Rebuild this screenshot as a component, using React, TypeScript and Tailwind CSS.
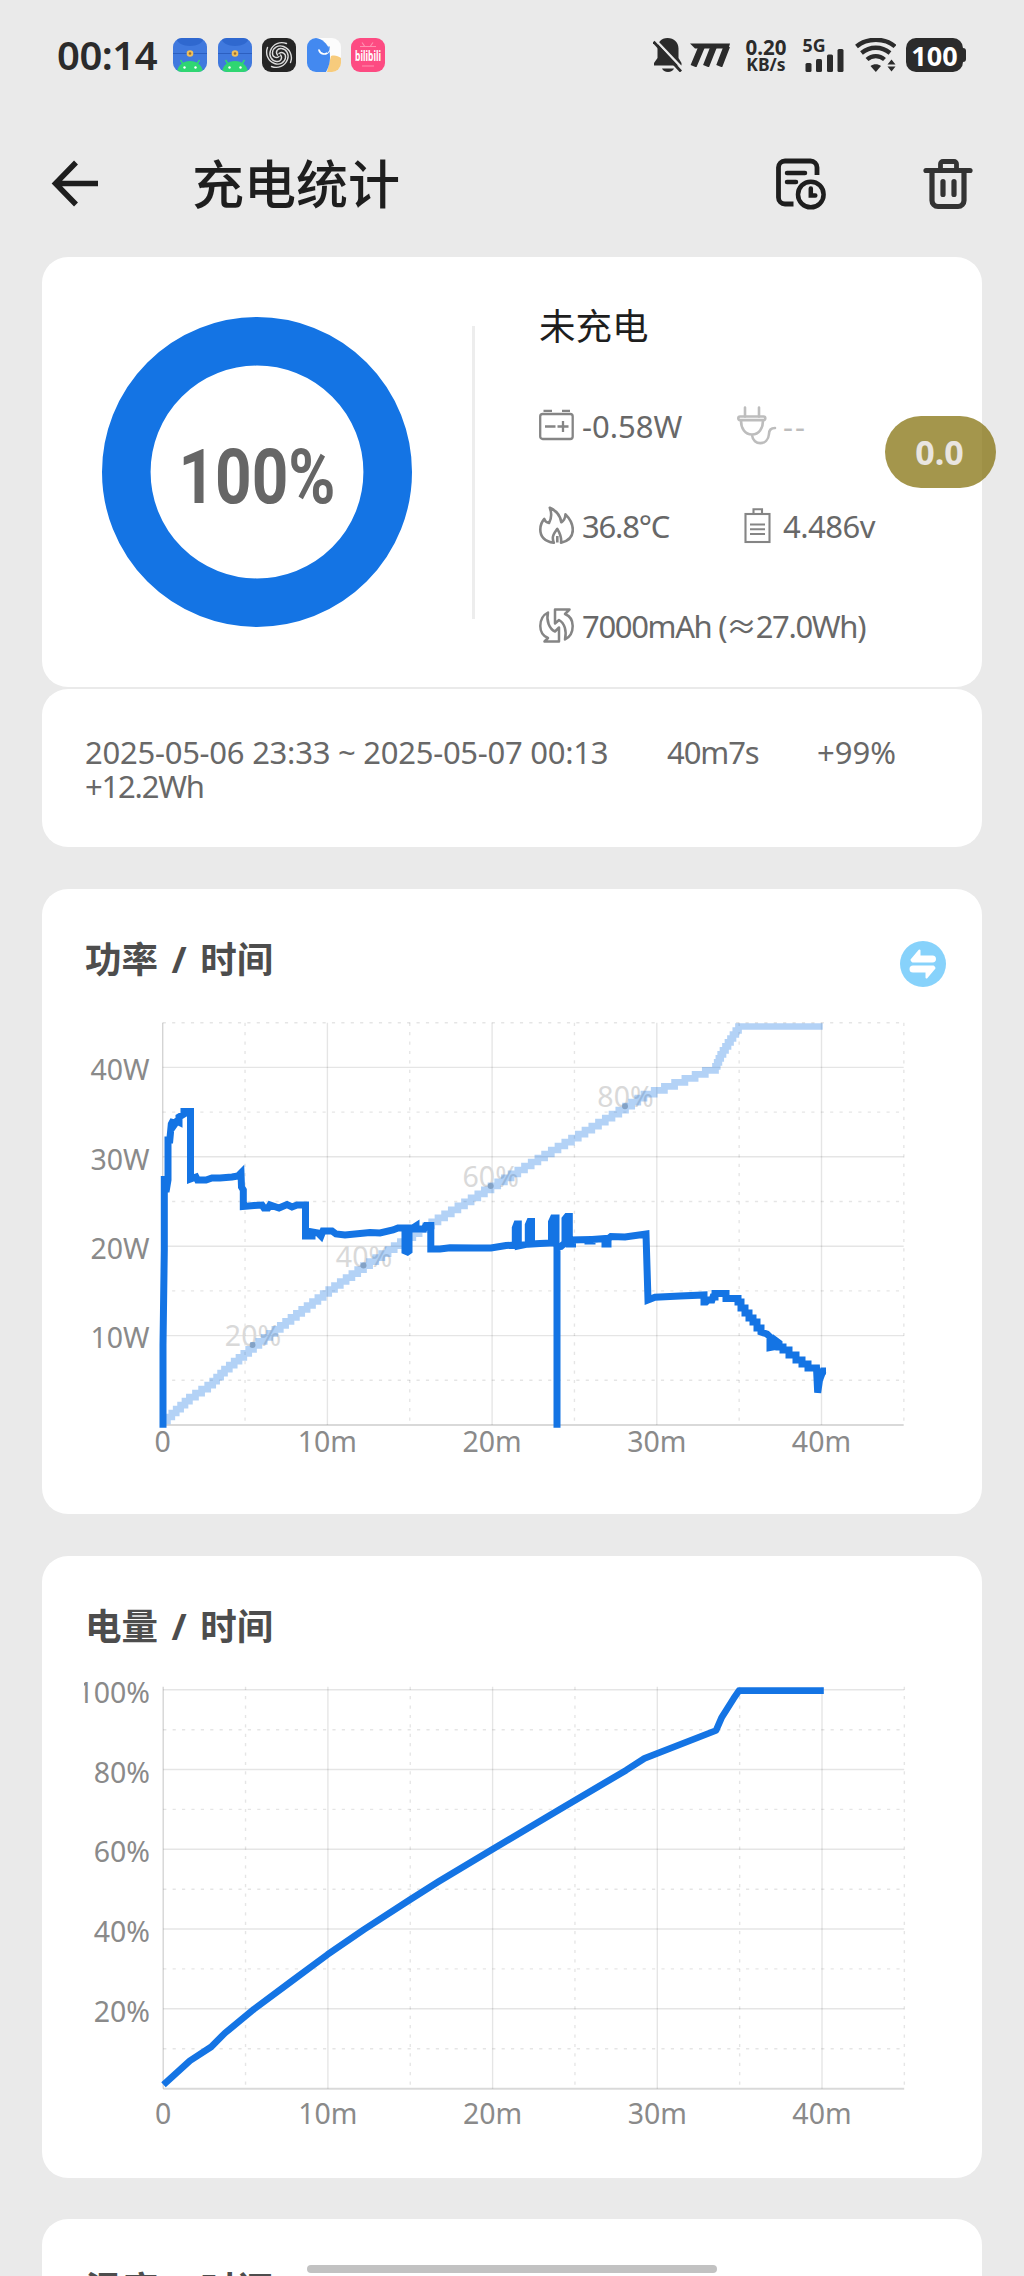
import React from 'react';

const LEFT = 162.7;
const RIGHT = 903.7;
const MINUTE = 16.47;

// [x, percent] along the battery curve
const LEVEL: [number, number][] = [
  [163, 1], [189.4, 7], [210.7, 10.5], [224.5, 14], [253.5, 20], [291, 27], [327, 33.7],
  [363.5, 40], [409.6, 47.5], [438, 52], [491, 60], [558, 70], [625.5, 80], [644, 83],
  [715.5, 90], [721, 93.2], [733, 98], [738.5, 100], [823.3, 100],
];

const POWER_PATH =
  'M163 1427.7V1345L164.3 1250V1176L166 1192L168 1180V1140L169.8 1140L171.3 1124L173.5 1120V1126L177 1121L179 1122V1117L184 1114V1111.5H190.5V1179L196 1177L197.5 1180H206L212 1178L220 1178L232 1177L238 1176L241 1173L241.5 1187L243.3 1190V1206.5L254 1205.5L262 1205L264 1208H268L270 1205L279 1208L287 1204.5L292 1207L297 1205H305.5V1236H312V1232L318 1233L321 1236L323 1231H332L336 1234L345 1235L370 1232.5L380 1233L393 1230L398 1228H405V1251L407.5 1252L409 1251V1228H413L416 1226V1229H424L426 1225.5H430.8V1249L440 1249L450 1247.8L475 1248L491 1248L506 1245.5L515.3 1245V1228L516.8 1224H518.3V1246L528.3 1244V1225L529.8 1221.5H531.5V1244L540 1243.5L551.5 1243V1222L553.3 1218H556V1243L557 1247V1427.7V1247L561 1246.5L565 1243V1219L567 1216.5H569.3V1244H572.5V1240L588 1239.5V1241H592V1239.5L605 1238.5V1244H608V1239L611 1236.500L625 1237L646 1234L648 1300L655 1297.3L680 1296L704 1295V1302H706L708 1300L712 1300L713 1297L715 1297V1293.5H726V1298.5H738V1302H741V1308H745V1313H749V1318H753V1322H757V1328H761V1332L767 1334L770 1337V1347.5L773 1347L775 1340L779 1343V1347H783V1350H789V1355H796V1360H802V1364H808V1368H816.5L817.7 1392.7L819.5 1380L823 1371H826';

function xAtPercent(pct: number) {
  for (let i = 1; i < LEVEL.length; i++) {
    const [x0, p0] = LEVEL[i - 1];
    const [x1, p1] = LEVEL[i];
    if (pct <= p1) return x0 + ((pct - p0) / (p1 - p0)) * (x1 - x0);
  }
  return LEVEL[LEVEL.length - 1][0];
}

function steppedLevelPath() {
  let d = 'M163 1421';
  for (let p = 2; p <= 100; p++) {
    d += `H${xAtPercent(p).toFixed(1)}V${(1425 - p * 3.985).toFixed(1)}`;
  }
  return d + 'H822.7';
}

const levelLine = LEVEL.map(([x, p]) => `${x},${(2088.7 - p * 3.98).toFixed(1)}`).join(' ');

function Grid({ top, bottom, solid, dashed }: { top: number; bottom: number; solid: number[]; dashed: number[] }) {
  return (
    <g fill="none" stroke="#000" strokeOpacity={0.1} strokeWidth={1.4}>
      {solid.map((y) => <path key={y} d={`M${LEFT} ${y}H${RIGHT}`} />)}
      {dashed.map((y) => <path key={y} d={`M${LEFT} ${y}H${RIGHT}`} strokeDasharray="3.2 6.2" />)}
      {[10, 20, 30, 40].map((m) => <path key={m} d={`M${LEFT + m * MINUTE} ${top}V${bottom}`} />)}
      {[5, 15, 25, 35, 45].map((m) => (
        <path key={m} d={`M${LEFT + m * MINUTE} ${top}V${bottom}`} strokeDasharray="3.2 6.2" />
      ))}
      <path d={`M${LEFT} ${top}V${bottom}`} strokeOpacity={0.17} />
      <path d={`M${LEFT} ${bottom}H${RIGHT}`} strokeOpacity={0.15} strokeWidth={2} />
    </g>
  );
}

function TimeLabels({ y }: { y: number }) {
  return (
    <g textAnchor="middle">
      {[0, 10, 20, 30, 40].map((m) => (
        <text key={m} x={LEFT + m * MINUTE} y={y}>{m === 0 ? '0' : `${m}m`}</text>
      ))}
    </g>
  );
}

function PowerChart() {
  return (
    <svg viewBox="84 1008 860 460" className="block h-[460px] w-[860px] text-[28.5px]" fill="#8a8a8a">
      <Grid
        top={1022.7}
        bottom={1425}
        solid={[1067.4, 1156.8, 1246.2, 1335.6]}
        dashed={[1022.7, 1112.1, 1201.5, 1290.9, 1380.3]}
      />
      <g textAnchor="end">
        <text x={149.5} y={1080.3}>40W</text>
        <text x={149.5} y={1169.7}>30W</text>
        <text x={149.5} y={1259}>20W</text>
        <text x={149.5} y={1348.3}>10W</text>
      </g>
      <TimeLabels y={1451.7} />
      <g fill="#d9d9d9" textAnchor="middle">
        <text x={253} y={1346}>20%</text>
        <text x={364} y={1266.5}>40%</text>
        <text x={490.7} y={1186.5}>60%</text>
        <text x={625.5} y={1107}>80%</text>
      </g>
      <g fill="#b9b9b9">
        <circle cx={252.5} cy={1345} r={3} />
        <circle cx={363.5} cy={1265.5} r={3} />
        <circle cx={490.7} cy={1186} r={3} />
        <circle cx={625} cy={1106.3} r={3} />
      </g>
      <path d={steppedLevelPath()} fill="none" stroke="#1474e4" strokeOpacity={0.32} strokeWidth={6.7} />
      <path d={POWER_PATH} fill="none" stroke="#1474e4" strokeWidth={7} />
    </svg>
  );
}

function LevelChart() {
  return (
    <svg viewBox="83.5 1674 860 466" className="block h-[466px] w-[860px] text-[28.5px]" fill="#8a8a8a">
      <Grid
        top={1686.7}
        bottom={2088.7}
        solid={[1689.8, 1769.5, 1849.3, 1929, 2008.8]}
        dashed={[1729.7, 1809.4, 1889.2, 1968.9, 2048.7]}
      />
      <g textAnchor="end">
        <text x={149.5} y={1702.8}>100%</text>
        <text x={149.5} y={1782.5}>80%</text>
        <text x={149.5} y={1862.3}>60%</text>
        <text x={149.5} y={1942}>40%</text>
        <text x={149.5} y={2021.8}>20%</text>
      </g>
      <TimeLabels y={2124} />
      <polyline points={levelLine} fill="none" stroke="#1474e4" strokeWidth={6.7} strokeLinejoin="round" />
    </svg>
  );
}

function AndroidAppIcon() {
  return (
    <svg viewBox="0 0 34 34" className="size-[34px] rounded-[9px]">
      <rect width="34" height="34" fill="#4079de" />
      <path d="M3 0h28c-1 5-7 8-14 8S4 5 3 0z" fill="#2f68cf" />
      <path d="M0 15.5h34" stroke="#2c5fc0" strokeWidth="1" />
      <circle cx="17" cy="15.5" r="3.3" fill="#f0c05a" />
      <circle cx="17" cy="15.5" r="1.3" fill="#9a6b31" />
      <path d="M4 34c1-7 6-11 13-11s12 4 13 11z" fill="#2fd672" />
      <path d="M10 26l-2.500-4M24 26l2.500-4" stroke="#2fd672" strokeWidth="1.500" />
      <circle cx="11.500" cy="29.500" r="1.200" fill="#fff" />
      <circle cx="22.500" cy="29.500" r="1.200" fill="#fff" />
    </svg>
  );
}

function SpiralAppIcon() {
  return (
    <svg viewBox="0 0 34 34" className="size-[34px] rounded-[9px]">
      <rect width="34" height="34" fill="#252525" />
      <g fill="none" stroke="#dcdcdc" strokeWidth="1.400" strokeLinecap="round">
        {[0, 90, 180, 270].map((a) => (
          <path key={a} transform={`rotate(${a} 17 17)`} d="M17 15.500c3-2.500 7 0 6.500 4-.5 5-6 8-11 6C6 23 3 16 5.500 9.500" />
        ))}
      </g>
    </svg>
  );
}

function ElephantAppIcon() {
  return (
    <svg viewBox="0 0 34 34" className="size-[34px] rounded-[9px]">
      <rect width="34" height="34" fill="#fcfcfc" />
      <path d="M24 18c4-1 7 0 10 2v14H20z" fill="#f7cb7c" />
      <path d="M0 0h9c6 1 11 5 13 11 2 8 1 16-3 23H0z" fill="#4389f0" />
      <path d="M12 12c1 4 7 6 10 1" fill="none" stroke="#fff" strokeWidth="1.700" strokeLinecap="round" />
      <path d="M20.500 14c1-1 1.500-3 1.500-5" fill="none" stroke="#4389f0" strokeWidth="1.500" strokeLinecap="round" />
    </svg>
  );
}

function BilibiliAppIcon() {
  return (
    <svg viewBox="0 0 34 34" className="size-[34px] overflow-visible">
      <rect width="34" height="34" rx="9" fill="#fd4b82" />
      <path d="M11 4.500l2.500 3.500M22 4.500l-2.500 3.500M9 8.500h16M11 28h12" stroke="#ff8fb0" strokeWidth="1.200" />
      <text x="17" y="23" textAnchor="middle" fill="#fff" fontSize="15" fontWeight="700" textLength="26" lengthAdjust="spacingAndGlyphs">
        bilibili
      </text>
    </svg>
  );
}

function StatusBar() {
  return (
    <div className="flex h-[110px] items-center justify-between pl-[57px] pr-[57px] text-[#2b2b2b]">
      <div className="flex items-center gap-[10.5px]">
        <div className="w-[105.5px] text-[40px] font-semibold leading-none tracking-[-0.5px]">00:14</div>
        <AndroidAppIcon />
        <AndroidAppIcon />
        <SpiralAppIcon />
        <ElephantAppIcon />
        <BilibiliAppIcon />
      </div>
      <div className="flex items-center">
        <svg viewBox="0 0 30 34" className="h-[34px] w-[30px]" fill="#2b2b2b">
          <path d="M14.500 0c6.500 0 11 4.500 11 10.500V20l3 5v2.500H1V25l3.500-5v-9.500C4.500 4.500 8 0 14.500 0z" />
          <path d="M9 30.500h12c-1 2-3 3.500-6 3.500s-5-1.500-6-3.500z" />
          <path d="M2 1.500L30 31" stroke="#eaeaea" strokeWidth="2.500" />
          <path d="M0.500 3.800L28 33.500" stroke="#2b2b2b" strokeWidth="2.800" />
        </svg>
        <svg viewBox="0 0 40 24" className="ml-[7px] h-6 w-10" fill="none" stroke="#2b2b2b">
          <path d="M0 .5h40l-1.500 5H5z" fill="#2b2b2b" stroke="none" />
          <path d="M3.500 23.200L12 3M16 23.200L24 3M29.200 23.200L37 3" strokeWidth="6.300" />
        </svg>
        <div className="ml-[13px] flex w-[46px] flex-col items-center font-bold">
          <span className="text-[20.500px] leading-[18px]">0.20</span>
          <span className="text-[17.500px] leading-[17px]">KB/s</span>
        </div>
        <svg viewBox="0 0 41 34" className="ml-[14px] h-[34px] w-[41px] overflow-visible" fill="#2b2b2b">
          <text x="-.5" y="13.500" fontSize="18" fontWeight="700" textLength="23" lengthAdjust="spacingAndGlyphs">5G</text>
          <rect x="2.500" y="25" width="6" height="9" rx="1.500" />
          <rect x="13" y="21" width="6" height="13" rx="1.500" />
          <rect x="24" y="16.500" width="6" height="17.500" rx="1.500" />
          <rect x="34.500" y="11" width="6" height="23" rx="1.500" />
        </svg>
        <svg viewBox="0 0 41 34" className="ml-[11px] h-[34px] w-[41px]" fill="none" stroke="#2b2b2b" strokeWidth="4.300">
          <path d="M1.500 8.500C12-.5 30-.5 40 8.500" />
          <path d="M6.500 15c8.500-7 20-7 28.500 0" />
          <path d="M12 21.500c5-4.500 12.500-4.500 17.500 0" />
          <path d="M15.500 28c3-2.500 7.500-2.500 10.500 0l-5.200 6z" fill="#2b2b2b" stroke="none" />
          <path d="M32.500 26.500l4-5 4 5zM32.500 28.500h8l-4 5z" fill="#2b2b2b" stroke="none" />
        </svg>
        <div className="relative ml-[10px] flex h-[34px] w-[57px] items-center justify-center rounded-[10px] bg-[#2b2b2b] text-[27px] font-bold leading-none text-white">
          100
          <span className="absolute -right-[3px] top-[10px] h-[14px] w-[4px] rounded-r-[3px] bg-[#2b2b2b]" />
        </div>
        <div className="w-[4px]" />
      </div>
    </div>
  );
}

function Header() {
  return (
    <header className="flex h-[147px] items-center pl-[51px] pr-[51px]">
      <svg viewBox="0 0 48 48" className="size-12" fill="none" stroke="#1e1e1e" strokeWidth="5.500">
        <path d="M25 2.500L4.500 23.500 25 44.500M5 23.500h42" />
      </svg>
      <h1 className="ml-[93px] text-[52px] font-medium leading-none text-[#1e1e1e]">充电统计</h1>
      <svg viewBox="0 0 52 52" className="ml-auto size-[52px]" fill="none" stroke="#1e1e1e" strokeWidth="4.800" strokeLinecap="round">
        <path d="M42 17V9.500A6.500 6.500 0 0 0 35.500 3H10a6.500 6.500 0 0 0-6.500 6.500v30A6.500 6.500 0 0 0 10 46h8.500" strokeLinecap="butt" />
        <path d="M12 15h18M12 24h9" strokeWidth="4.500" />
        <circle cx="35.800" cy="36.500" r="12.800" strokeWidth="4.500" />
        <path d="M35.800 30.500v7h4.500" strokeWidth="4.500" />
      </svg>
      <svg viewBox="0 0 50 52" className="ml-[96px] h-[52px] w-[50px]" fill="none" stroke="#333" strokeWidth="5.200" strokeLinecap="round">
        <path d="M3 12.500h44" />
        <path d="M17.500 12V6a2.500 2.500 0 0 1 2.500-2.500h11A2.500 2.500 0 0 1 33.500 6v6" strokeWidth="4.800" />
        <path d="M9 13v29.500a6 6 0 0 0 6 6h20a6 6 0 0 0 6-6V13" />
        <path d="M20 23.500v13M31 23.500v13" strokeWidth="5.200" />
      </svg>
    </header>
  );
}

function Stat({ icon, children, className = '' }: { icon: React.ReactNode; children: React.ReactNode; className?: string }) {
  return (
    <div className={`flex items-center whitespace-pre pb-[2px] text-[31px] leading-none ${className}`}>
      {icon}
      <span>{children}</span>
    </div>
  );
}

function SummaryCard() {
  return (
    <section className="flex h-[430px] w-[940px] items-center rounded-[26px] bg-white">
      <svg viewBox="0 0 310 310" className="ml-[60px] size-[310px]">
        <circle cx="155" cy="155" r="130.700" fill="none" stroke="#1474e4" strokeWidth="48.600" />
        <text x="155" y="185.500" textAnchor="middle" textLength="157" lengthAdjust="spacingAndGlyphs" className="font-['Roboto',sans-serif] text-[76px] font-bold" fill="#666">
          100%
        </text>
      </svg>
      <div className="ml-[60px] h-[293px] w-[3px] bg-[#ededed]" />
      <div className="ml-[64px] grid h-full grid-rows-[100px_100px_100px_100px] pt-[20px]">
        <div className="flex items-center pb-[2px] text-[36.500px] leading-none text-[#1e1e1e]">未充电</div>
        <div className="flex">
          <Stat
            className="w-[198px] text-[#686868]"
            icon={
              <svg viewBox="0 0 35 40" className="mr-[8px] h-10 w-[35px]" fill="none" stroke="#858585" strokeWidth="2.300">
                <rect x="1.200" y="8" width="32.500" height="25" rx="2.500" />
                <path d="M4.500 4.800h8.500M23 4.800h8M6 20.500h10.500M18.500 20.500h11M24 15v11" />
              </svg>
            }
          >
            -0.58W
          </Stat>
          <Stat
            className="text-[#bdbdbd]"
            icon={
              <svg viewBox="0 0 40 40" className="mr-[6px] size-10" fill="none" stroke="#bdbdbd" strokeWidth="2.600" strokeLinecap="round">
                <path d="M8 1.500v9M22 1.500v9" />
                <rect x="1.300" y="10.500" width="27" height="3.600" rx="1.800" />
                <path d="M4 14.500c0 8 4 14 11 14s11-6 11-14M15 29c1 11 16 11 17-1 0-4 2-6 6-6" />
              </svg>
            }
          >
            <span className="tracking-[2px]">--</span>
          </Stat>
        </div>
        <div className="flex">
          <Stat
            className="w-[198px] tracking-[-1.200px] text-[#686868]"
            icon={
              <svg viewBox="0 0 35 40" className="mr-[8px] h-10 w-[35px]" fill="none" stroke="#858585" strokeWidth="2.600" strokeLinejoin="round">
                <path d="M10.800 1.800c7 3 10.500 7.500 11.500 14.500 2.500-1.500 4-4.500 4.200-8 5 5 7.300 10 7.300 15.500 0 6.500-4.300 11.200-11.800 13 .8-5-1-9.500-3.700-14-2.500 3.500-4.500 5.500-4.500 9 0 2 .3 3.500 1 5C6 35.500 1.300 31 1.300 23.500c0-5 1.700-8 4-10.500.5 2 2 3.500 4.700 4C12.500 12.500 12.800 7 10.800 1.800z" />
                <path d="M18.300 30v6.500" />
              </svg>
            }
          >
            36.8°C
          </Stat>
          <Stat
            className="tracking-[-0.500px] text-[#686868]"
            icon={
              <svg viewBox="0 0 40 40" className="mr-[6px] size-10" fill="none" stroke="#858585" strokeWidth="2.100">
                <rect x="8.500" y="8" width="24" height="28" />
                <path d="M16.500 8V3.300h8.500V8M13 18.500h15M13 23.300h15M13 28h15" />
              </svg>
            }
          >
            4.486v
          </Stat>
        </div>
        <Stat
          className="tracking-[-1.350px] text-[#686868]"
          icon={
            <svg viewBox="0 0 35 40" className="mr-[8px] h-10 w-[35px]" fill="none" stroke="#858585" strokeWidth="2.500" strokeLinejoin="round">
              <path d="M9 6.500C3 9.500 1.300 14.500 1.300 20c0 5.500 2.700 10 7.700 12l-3.500 3.500H20V21.500l-4 4C10.500 23 7 15 9 6.500z" />
              <path d="M26 33.500c6-3 7.700-8 7.700-13.500 0-5.500-2.700-10-7.700-12l4.500-4.500H16v14l4-3.500c5.500 3 8 11 6 19.500z" />
            </svg>
          }
        >
          7000mAh (≈27.0Wh)
        </Stat>
      </div>
    </section>
  );
}

function SessionCard() {
  return (
    <section className="mt-[2px] flex h-[158px] flex-col rounded-[26px] bg-white pl-[43px] pt-[45.500px] text-[31px] leading-[34px] text-[#686868]">
      <div className="flex whitespace-pre">
        <span className="w-[582px] tracking-[-0.250px]">2025-05-06 23:33 ~ 2025-05-07 00:13</span>
        <span className="w-[150px] tracking-[-1.100px]">40m7s</span>
        <span>+99%</span>
      </div>
      <div className="tracking-[-1.200px]">+12.2Wh</div>
    </section>
  );
}

function CardTitle({ children }: { children: React.ReactNode }) {
  return <h2 className="text-[36.500px] font-bold leading-[46px] text-[#4d4d4d] [word-spacing:4px]">{children}</h2>;
}

export default function App() {
  return (
    <div className="relative h-[2276px] w-[1024px] overflow-hidden bg-[#eaeaea] font-['Noto_Sans','Noto_Sans_CJK_SC',sans-serif]">
      <StatusBar />
      <Header />
      <main className="flex flex-col px-[42px]">
        <SummaryCard />
        <SessionCard />

        <section className="mt-[42px] h-[624.500px] rounded-[26px] bg-white pl-[42px] pt-[47px]">
          <div className="flex h-[72px] items-start justify-between pl-px pr-[36px]">
            <CardTitle>功率 / 时间</CardTitle>
            <svg viewBox="0 0 46 46" className="mt-[5px] size-[46px]">
              <circle cx="23" cy="23" r="23" fill="#87d2fb" />
              <path d="M11.500 19l8-9.500V15.500h13a2.500 2.500 0 0 1 0 5H12.500z" fill="#fff" stroke="#fff" strokeWidth="2" strokeLinejoin="round" />
              <path d="M34.500 27l-8 9.500V30.500H13a2.500 2.500 0 0 1 0-5h20.500z" fill="#fff" stroke="#fff" strokeWidth="2" strokeLinejoin="round" />
            </svg>
          </div>
          <PowerChart />
        </section>

        <section className="mt-[42px] h-[622px] rounded-[26px] bg-white pl-[41.500px] pt-[47px]">
          <div className="h-[71px] pl-[1.500px]">
            <CardTitle>电量 / 时间</CardTitle>
          </div>
          <LevelChart />
        </section>

        <section className="mt-[41.500px] h-[622px] rounded-t-[26px] bg-white pl-[43px] pt-[47px]">
          <CardTitle>温度 / 时间</CardTitle>
        </section>
      </main>

      {/* Floating reading bubble */}
      <div className="absolute left-[885px] top-[416px] flex h-[72px] w-[111px] items-center justify-center rounded-full bg-[#7e6a00]/70 pr-[2px] text-[34px] font-bold leading-none text-[#e9e5e0]">
        0.0
      </div>
      {/* Gesture bar */}
      <div className="absolute left-[307px] top-[2265px] h-2 w-[410px] rounded-full bg-[#c2c2c2]" />
    </div>
  );
}
